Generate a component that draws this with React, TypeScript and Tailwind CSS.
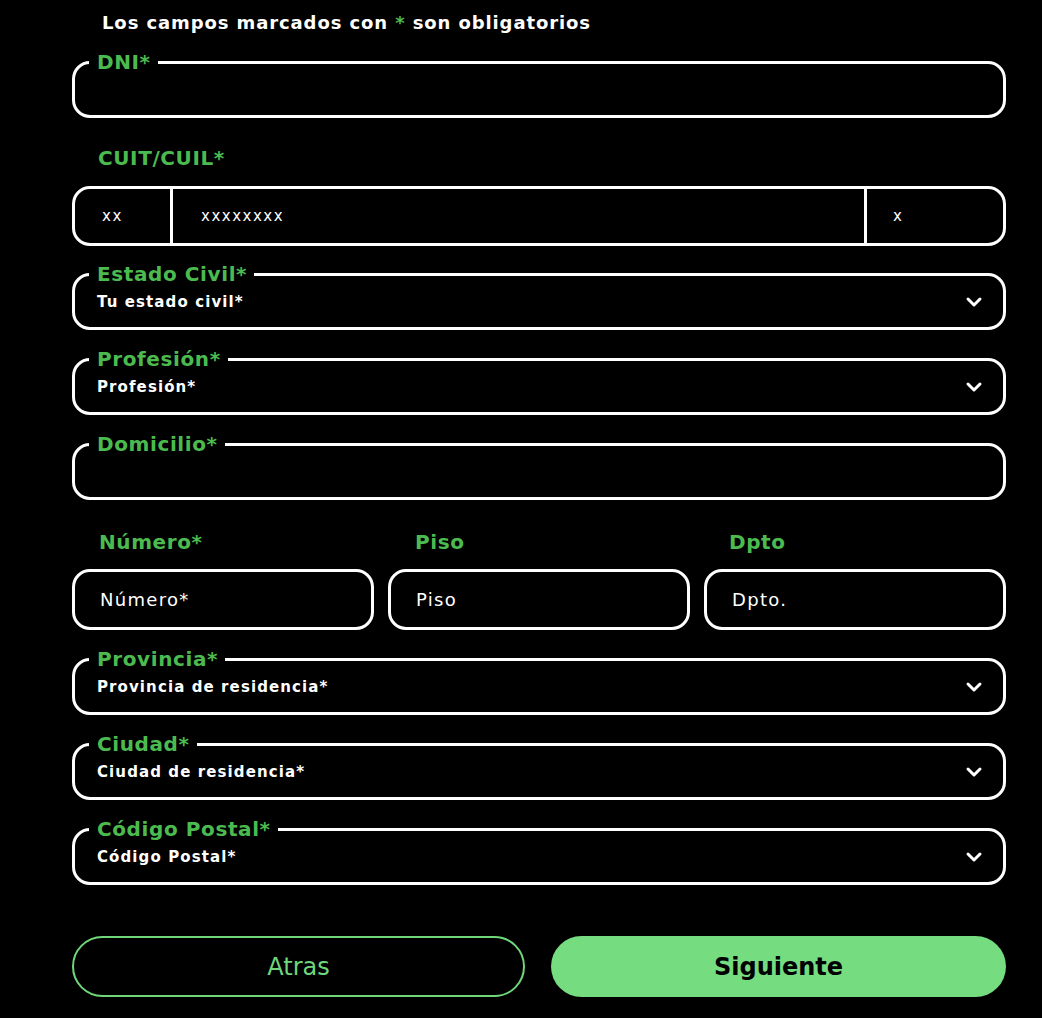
import { ChevronDown } from 'lucide-react';

const font = { fontFamily: '"DejaVu Sans", Verdana, sans-serif' };

function Legend({ text }: { text: string }) {
  return (
    <legend className="ml-[14px] pl-[8px] pr-[7px] text-[20px] leading-[22px] font-bold tracking-[0.6px] text-[#4cbb4f]">
      {text}
    </legend>
  );
}

function TextField({ label }: { label: string }) {
  return (
    <fieldset className="border-[3px] border-white rounded-[18px] h-[67px]">
      <Legend text={label} />
      <input className="w-full bg-transparent outline-none text-white text-[15px] px-[22px]" />
    </fieldset>
  );
}

function SelectField({ label, placeholder }: { label: string; placeholder: string }) {
  return (
    <fieldset className="border-[3px] border-white rounded-[18px] h-[67px]">
      <Legend text={label} />
      <div className="flex items-center justify-between h-[33px] pl-[22px] pr-[17px]">
        <span className="text-white text-[15px] font-bold leading-[20px] tracking-[1.1px]">{placeholder}</span>
        <ChevronDown className="text-white" size={24} strokeWidth={3} />
      </div>
    </fieldset>
  );
}

function Box({ placeholder }: { placeholder: string }) {
  return (
    <div className="flex-1 border-[3px] border-white rounded-[18px] h-[61px] flex items-center px-[25px]">
      <span className="text-white text-[18px] leading-none tracking-[1.3px]">{placeholder}</span>
    </div>
  );
}

export default function App() {
  return (
    <div className="min-h-screen bg-black pl-[72px] pr-[36px] pt-[12px] pb-[22px]" style={font}>
      <p className="pl-[30px] text-white font-bold text-[18px] leading-[22px] tracking-[0.9px] mb-[17px]">
        Los campos marcados con <span className="text-[#4cbb4f]">*</span> son obligatorios
      </p>

      <TextField label="DNI*" />

      <p className="mt-[29px] pl-[26px] text-[20px] leading-[22px] font-bold tracking-[0.6px] text-[#4cbb4f]">CUIT/CUIL*</p>
      <div className="mt-[17px] flex border-[3px] border-white rounded-[18px] h-[60px] text-white text-[15px] tracking-[1.5px]">
        <div className="w-[98px] flex items-center pl-[27px] border-r-[3px] border-white">xx</div>
        <div className="flex-1 flex items-center pl-[28px] border-r-[3px] border-white">xxxxxxxx</div>
        <div className="w-[136px] flex items-center pl-[26px]">x</div>
      </div>

      <div className="mt-[17px] flex flex-col gap-[18px]">
        <SelectField label="Estado Civil*" placeholder="Tu estado civil*" />
        <SelectField label="Profesión*" placeholder="Profesión*" />
        <TextField label="Domicilio*" />
      </div>

      <div className="mt-[31px] grid grid-cols-[302px_1fr_302px] gap-x-[14px]">
        <p className="pl-[27px] text-[20px] leading-[22px] font-bold tracking-[0.6px] text-[#4cbb4f]">Número*</p>
        <p className="pl-[27px] text-[20px] leading-[22px] font-bold tracking-[0.6px] text-[#4cbb4f]">Piso</p>
        <p className="pl-[25px] text-[20px] leading-[22px] font-bold tracking-[0.6px] text-[#4cbb4f]">Dpto</p>
        <div className="mt-[16px] flex">
          <Box placeholder="Número*" />
        </div>
        <div className="mt-[16px] flex">
          <Box placeholder="Piso" />
        </div>
        <div className="mt-[16px] flex">
          <Box placeholder="Dpto." />
        </div>
      </div>

      <div className="mt-[18px] flex flex-col gap-[18px]">
        <SelectField label="Provincia*" placeholder="Provincia de residencia*" />
        <SelectField label="Ciudad*" placeholder="Ciudad de residencia*" />
        <SelectField label="Código Postal*" placeholder="Código Postal*" />
      </div>

      <div className="mt-[51px] flex gap-[26px]">
        <button className="w-[453px] h-[61px] rounded-full border-2 border-[#6fd67a] text-[#6fd67a] text-[24px]">
          Atras
        </button>
        <button className="flex-1 h-[61px] rounded-full bg-[#75dc7f] text-black font-bold text-[24px]">
          Siguiente
        </button>
      </div>
    </div>
  );
}
